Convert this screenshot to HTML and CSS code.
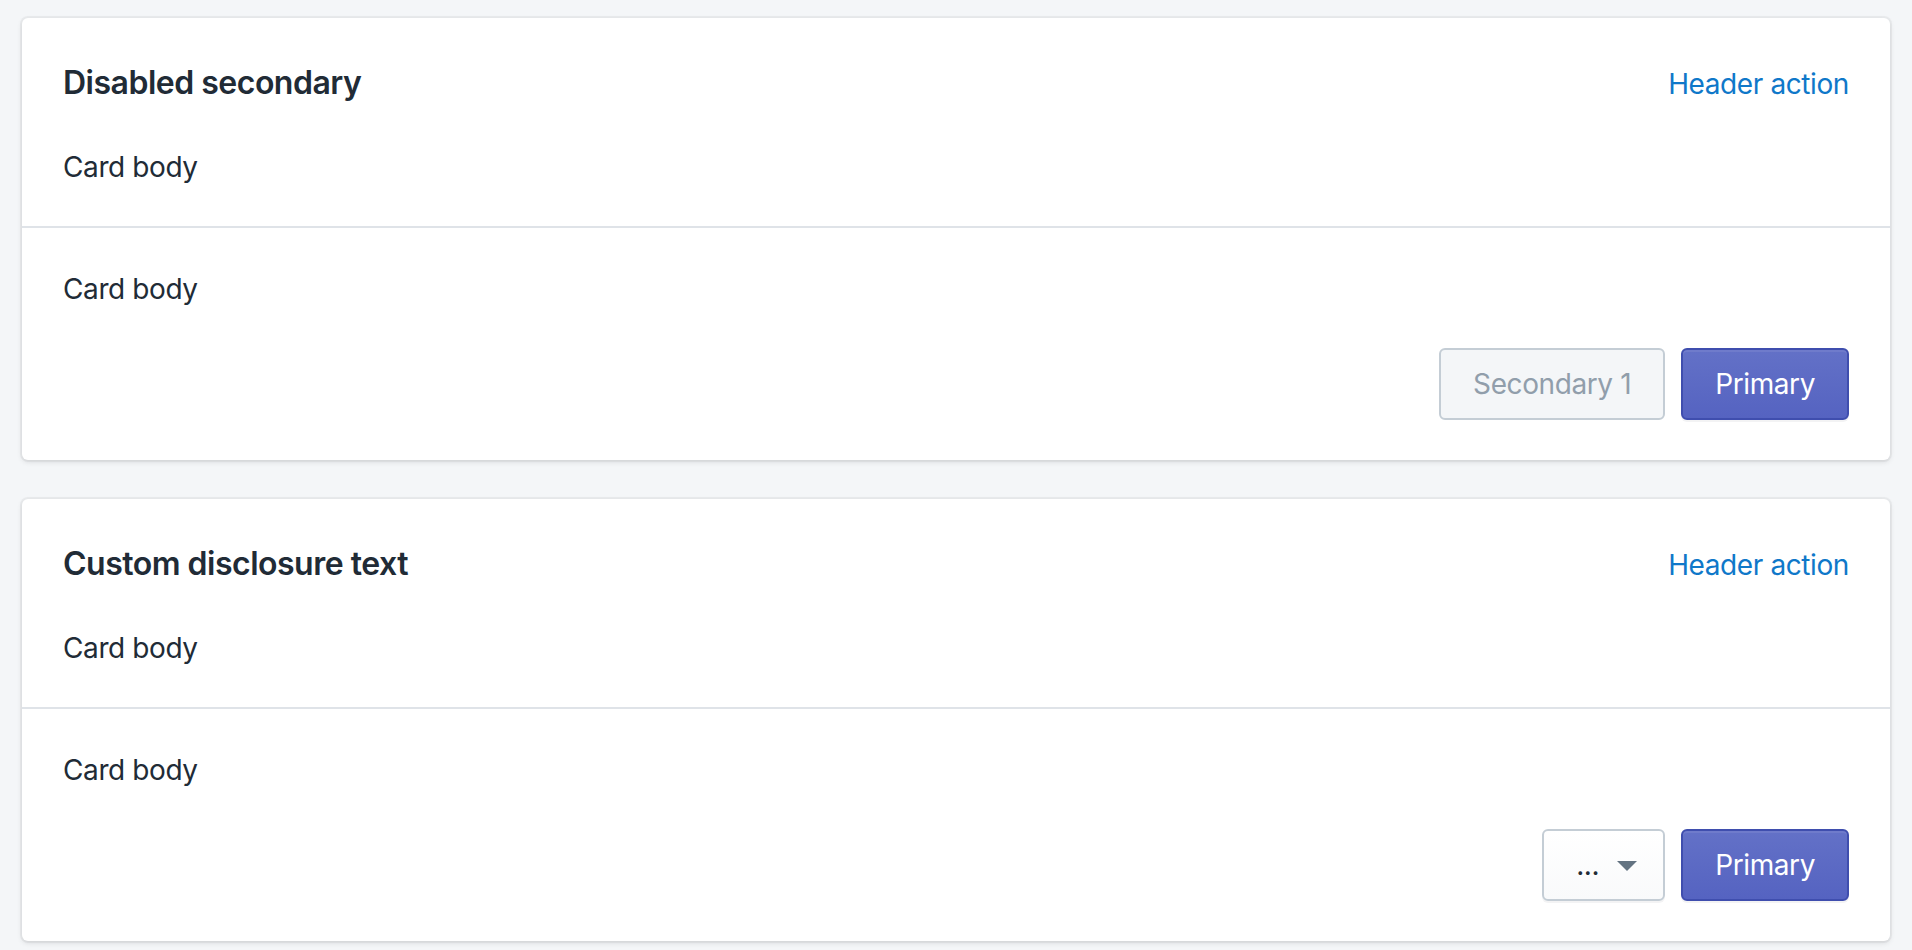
FILE: index.html
```html
<!DOCTYPE html>
<html lang="en">
<head>
<meta charset="utf-8">
<title>Cards</title>
<link rel="stylesheet" href="styles.css">
</head>
<body>
  <div class="page">
    <div class="card">
      <div class="card-header">
        <h2 class="card-title">Disabled secondary</h2>
        <a class="link" href="#">Header action</a>
      </div>
      <div class="card-section"><p>Card body</p></div>
      <div class="card-section divided"><p>Card body</p></div>
      <div class="card-footer">
        <button class="btn btn-disabled" disabled>Secondary 1</button>
        <button class="btn btn-primary">Primary</button>
      </div>
    </div>

    <div class="card">
      <div class="card-header">
        <h2 class="card-title">Custom disclosure text</h2>
        <a class="link" href="#">Header action</a>
      </div>
      <div class="card-section"><p>Card body</p></div>
      <div class="card-section divided"><p>Card body</p></div>
      <div class="card-footer">
        <button class="btn btn-secondary"><span>...</span><svg class="caret" viewBox="0 0 20 20" width="40" height="40"><path d="M5 8l5 5 5-5z"/></svg></button>
        <button class="btn btn-primary">Primary</button>
      </div>
    </div>
  </div>
</body>
</html>
```

FILE: styles.css
```css
* { box-sizing: border-box; }
html, body { margin: 0; padding: 0; }
body {
  background: #f4f6f8;
  font-family: Inter, "Noto Sans", "Liberation Sans", sans-serif;
  color: #212b36;
  font-size: 28px;
  letter-spacing: -0.4px;
}
.page {
  padding: 18px 22px;
}
.card {
  background: #fff;
  border-radius: 6px;
  box-shadow: 0 0 0 2px rgba(63, 63, 68, 0.05), 0 2px 5px 0 rgba(63, 63, 68, 0.15);
}
.card + .card { margin-top: 39px; }
.card-header {
  display: flex;
  justify-content: space-between;
  align-items: center;
  padding: 41px 41px 0;
}
.card-title {
  margin: 0;
  font-size: 32px;
  line-height: 47px;
  font-weight: 600;
  letter-spacing: -0.5px;
  color: #212b36;
}
.link {
  color: #0f78c9;
  text-decoration: none;
  line-height: 40px;
  padding-top: 2px;
}
.card-section {
  padding: 41px 41px 39px;
}
.card-section p {
  margin: 0;
  line-height: 40px;
}
.card-section.divided {
  border-top: 2px solid #dfe3e8;
}
.card-footer {
  display: flex;
  justify-content: flex-end;
  gap: 16px;
  padding: 0 41px 40px;
}
.btn {
  display: inline-flex;
  align-items: center;
  justify-content: center;
  height: 72px;
  padding: 0 32px;
  border: 2px solid #c4cdd5;
  border-radius: 6px;
  font-family: inherit;
  font-size: 28px;
  letter-spacing: -0.4px;
  line-height: 1;
  cursor: pointer;
}
.btn-disabled {
  background: #f4f6f8;
  color: #919eab;
  cursor: default;
}
.btn-secondary {
  background: linear-gradient(to bottom, #fff, #f9fafb);
  color: #212b36;
  box-shadow: 0 2px 0 0 rgba(22, 29, 37, 0.05);
}
.btn-primary {
  background: linear-gradient(to bottom, #6371c7, #5563c1);
  border-color: #3f4eae;
  color: #fff;
  box-shadow: inset 0 2px 0 0 #6f7bcb, 0 2px 0 0 rgba(22, 29, 37, 0.05);
}
.caret {
  fill: #637381;
  margin: 0 -16px 0 8px;
}
```
